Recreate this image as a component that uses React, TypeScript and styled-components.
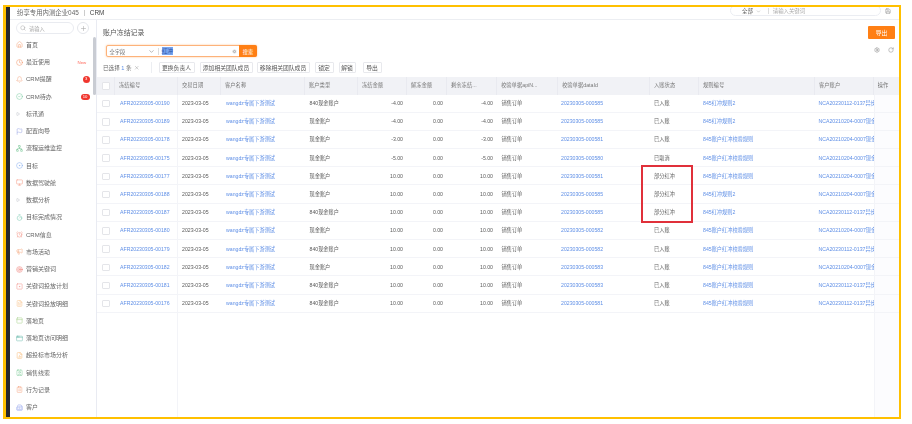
import React from "react";
import styled, { createGlobalStyle } from "styled-components";
import {
  House, Clock, Bell, CircleCheck, Flag, Network, CircleDot, Monitor, Timer, AlarmClock, Megaphone, Target,
  SquareDot, FileText, PanelTop, AppWindow, FileChartColumn, Contact, ClipboardList, Building2,
  Search, Plus, ChevronDown, X, CircleX, Settings, RotateCw, Save, Play,
} from "lucide-react";

const Global = createGlobalStyle`
  html, body { margin: 0; padding: 0; background: #fff; }
  * { box-sizing: border-box; }
  body { font-family: "Liberation Sans", "Noto Sans CJK SC", sans-serif; color: #555; }
`;

const COLS = "18px 63px 43px 84px 53px 49px 40px 50px 61px 92px 49px 116px 58.7px 25.3px";

const Frame = styled.div`
  width: 898px; height: 414px; margin: 5px 0 0 3px;
  border: 2px solid #ffc000; border-left-width: 3px;
  display: flex; overflow: hidden; background: #fff;
`;
const Strip = styled.div`width: 4px; background: #26282e; flex: none;`;
const Main = styled.div`flex: 1; min-width: 0; display: flex; flex-direction: column; filter: blur(0.3px);`;
const Header = styled.header`
  height: 12.5px; flex: none; display: flex; align-items: center; justify-content: space-between;
  padding: 0 8px 0 7px; border-bottom: 1px solid #eceef2; overflow: hidden;
`;
const Brand = styled.div`display: flex; align-items: center; font-size: 6.4px; line-height: 8px; color: #666;`;
const BrandSep = styled.span`width: 1px; height: 6px; background: #ccc; margin: 0 5px;`;
const BrandApp = styled.b`font-weight: 400; color: #444;`;
const HeaderRight = styled.div`display: flex; align-items: flex-start; gap: 4px; align-self: flex-start;`;
const Pill = styled.div`
  width: 151px; height: 11px; margin-top: -2px; border: 1px solid #ebedf2; border-radius: 6px;
  display: flex; align-items: center; padding: 1px 0 0 11px; font-size: 5.4px; line-height: 7px; color: #555;
`;
const PillDivider = styled.span`width: 1px; height: 6px; background: #ddd; margin: 0 4px 0 7px;`;
const PillHint = styled.span`color: #aaa;`;
const PillChevron = styled.span`display: flex; margin-left: 3px; color: #999;`;
const HeaderIcon = styled.span`display: flex; color: #888; margin-top: 1px;`;

const Body = styled.div`flex: 1; min-height: 0; display: flex;`;
const Side = styled.aside`
  width: 87px; flex: none; position: relative; border-right: 1px solid #e9ebf2; padding-top: 2.5px; overflow: hidden;
`;
const SideSearch = styled.div`display: flex; align-items: center; padding-left: 6px; gap: 3px; height: 12px; margin-bottom: 2.3px;`;
const SearchBox = styled.div`
  width: 58px; height: 12px; border: 1px solid #e9ebf0; border-radius: 6px; display: flex; align-items: center;
  gap: 3px; padding-left: 3px; color: #aaa; font-size: 5.2px;
`;
const AddCircle = styled.div`
  width: 12px; height: 12px; border: 1px solid #e4e6eb; border-radius: 50%; display: flex; align-items: center;
  justify-content: center; color: #aaa;
`;
const NavItem = styled.div`
  height: 17.25px; display: flex; align-items: center; padding-left: 6px; font-size: 6px; line-height: 8px; color: #666; position: relative;
`;
const NavIcon = styled.span<{ $c: string }>`width: 10px; display: flex; align-items: center; color: ${p => p.$c}; flex: none;`;
const NavLabel = styled.span`white-space: nowrap;`;
const NewTag = styled.span`position: absolute; left: 67.5px; top: 6px; color: #ff6b5e; font-size: 4.4px; line-height: 5px;`;
const Badge = styled.span<{ $l: number; $w: number }>`
  position: absolute; left: ${p => p.$l}px; top: 5.5px; width: ${p => p.$w}px; height: 6.5px; border-radius: 4px;
  background: #f0362e; color: #fff; font-size: 4.2px; line-height: 6.5px; text-align: center;
`;
const Thumb = styled.div`position: absolute; left: 83px; top: 17.5px; width: 3px; height: 58px; background: #c9ccd3; border-radius: 2px;`;

const Content = styled.main`flex: 1; min-width: 0; display: flex; flex-direction: column;`;
const Head = styled.div`
  height: 25.5px; flex: none; display: flex; justify-content: space-between; align-items: flex-start;
  padding: 6.5px 4px 0 6px;
`;
const Title = styled.h1`margin: 0; font-weight: 400; font-size: 6.9px; line-height: 13px; color: #555;`;
const ExportBtn = styled.button`
  width: 27px; height: 13px; padding: 0; border: 0; border-radius: 1px; background: #ff7f14; color: #fff;
  font: inherit; font-size: 5.8px;
`;
const SearchRow = styled.div`height: 12px; flex: none; display: flex; justify-content: space-between; padding: 0 5px 0 9px;`;
const Finder = styled.div`
  width: 151px; height: 12px; display: flex; align-items: center; border: 1px solid #fdb27a; border-radius: 2px;
  box-shadow: 0 0 2px rgba(255,140,40,.55); font-size: 5.2px; color: #666; background: #fff;
`;
const FieldSelect = styled.div`width: 51px; display: flex; align-items: center; justify-content: space-between; padding: 0 3px 0 2.5px;`;
const FieldDivider = styled.span`width: 1px; height: 7px; background: #ddd; margin-right: 3px;`;
const Selected = styled.span`
  background: #79a4ee; color: #2c55a8; width: 11px; height: 8px; line-height: 8px; font-size: 5.4px; flex: none;
`;
const ClearIcon = styled.span`margin-left: auto; margin-right: 2.5px; display: flex; color: #bbb;`;
const FindBtn = styled.button`
  width: 18px; height: 12px; margin-right: -1px; padding: 0; border: 0; background: #ff7f14; color: #fff;
  font: inherit; font-size: 5.2px; border-radius: 0 2px 2px 0;
`;
const Tools = styled.div`display: flex; gap: 8px; height: 10px; align-items: center; color: #888;`;
const Toolbar = styled.div`
  height: 11px; margin-top: 5px; flex: none; display: flex; align-items: center; padding-left: 6px; font-size: 5.6px; color: #666;
`;
const SelCount = styled.span`white-space: nowrap; width: 31px;`;
const SelNum = styled.span`color: #5a8ee8;`;
const SelClose = styled.span`display: flex; width: 6px; color: #999;`;
const ToolDivider = styled.span`width: 1px; height: 11px; background: #eceef2; margin: 0 6.5px 0 11px;`;
const ToolBtn = styled.button<{ $w: number; $ml?: number }>`
  width: ${p => p.$w}px; height: 11px; padding: 0; margin-left: ${p => p.$ml ?? 0}px; flex: none;
  background: #fff; border: 1px solid #e8e9ed; border-radius: 1px; font: inherit; font-size: 5.8px; color: #555; white-space: nowrap;
`;

const Table = styled.div`margin-top: 4px; flex: 1; min-height: 0; display: flex; flex-direction: column;`;
const HeadRow = styled.div`
  height: 17.5px; flex: none; display: grid; grid-template-columns: ${COLS}; background: #f1f2f6;
`;
const HeadCell = styled.div`
  display: flex; align-items: center; padding-left: 4px; font-size: 5.3px; line-height: 7px; color: #777; white-space: nowrap; overflow: hidden;
  border-right: 1px solid #e9eaf0;
  &:first-child { padding-left: 0; }
  &:last-child { border-right: 0; }
`;
const Row = styled.div`
  height: 18.2px; flex: none; display: grid; grid-template-columns: ${COLS}; border-bottom: 1px solid #f3f4f8;
`;
const Filler = styled.div`flex: 1; display: grid; grid-template-columns: ${COLS};`;
const Cell = styled.div<{ $link?: boolean; $right?: boolean; $line?: boolean; $fixed?: boolean; $pad?: number }>`
  display: flex; align-items: center; justify-content: ${p => (p.$right ? "flex-end" : "flex-start")};
  padding: ${p => (p.$right ? "1px 4px 0 0" : `1px 0 0 ${p.$pad ?? 4}px`)};
  font-size: 5.2px; line-height: 7px; white-space: nowrap; overflow: hidden;
  color: ${p => (p.$link ? "#5f8fe6" : "#5a5a5a")};
  ${p => (p.$line ? "border-right: 1px solid #f3f4f8;" : "")}
  ${p => (p.$fixed ? "border-left: 1px solid #f3f4f8; background: #fcfcfe;" : "")}
`;
const Check = styled.span`
  width: 7.5px; height: 7.5px; margin-left: 5px; border: 1px solid #e4e5e9; border-radius: 1px; background: #fff; flex: none;
`;
const HighlightBox = styled.div`
  position: absolute; left: 641px; top: 165px; width: 52px; height: 58px; border: 2px solid #e0303a; pointer-events: none;
`;
const Stage = styled.div`position: relative; width: 912px; height: 424px; overflow: hidden;`;

type RowData = [string, string, string, string, string, string, string, string];
const A = "NCA20230112-0137异步现金账户";
const B = "NCA20210204-0007现金账户";
const R1 = "845红冲规则2";
const R2 = "845账户红冲校验规则";
const rows: RowData[] = [
  ["190", "840现金账户", "-4.00", "-4.00", "000585", "已入账", R1, A],
  ["189", "现金账户", "-4.00", "-4.00", "000585", "已入账", R1, B],
  ["178", "现金账户", "-3.00", "-3.00", "000581", "已入账", R2, B],
  ["175", "现金账户", "-5.00", "-5.00", "000580", "已取消", R2, B],
  ["177", "现金账户", "10.00", "10.00", "000581", "部分红冲", R2, B],
  ["188", "现金账户", "10.00", "10.00", "000585", "部分红冲", R1, B],
  ["187", "840现金账户", "10.00", "10.00", "000585", "部分红冲", R1, A],
  ["180", "现金账户", "10.00", "10.00", "000582", "已入账", R2, B],
  ["179", "840现金账户", "10.00", "10.00", "000582", "已入账", R2, A],
  ["182", "现金账户", "10.00", "10.00", "000583", "已入账", R2, B],
  ["181", "840现金账户", "10.00", "10.00", "000583", "已入账", R2, A],
  ["176", "840现金账户", "10.00", "10.00", "000581", "已入账", R2, A],
];

const heads = ["", "冻结编号", "交易日期", "客户名称", "账户类型", "冻结金额", "解冻金额", "剩余冻结...", "校验单据apiN...", "校验单据dataId", "入账状态", "规则编号", "客户账户", "操作"];

const nav: { label: string; Icon: React.ElementType; c: string; extra?: React.ReactNode }[] = [
  { label: "首页", Icon: House, c: "#f39a6b" },
  { label: "最近使用", Icon: Clock, c: "#f08a5a", extra: <NewTag>New</NewTag> },
  { label: "CRM提醒", Icon: Bell, c: "#f3a17c", extra: <Badge $l={73} $w={6.5}>3</Badge> },
  { label: "CRM待办", Icon: CircleCheck, c: "#71c79a", extra: <Badge $l={70.5} $w={9}>10</Badge> },
  { label: "标讯通", Icon: Play, c: "#8a8f9c" },
  { label: "配置向导", Icon: Flag, c: "#8f9be0" },
  { label: "流程运维监控", Icon: Network, c: "#6cc08c" },
  { label: "目标", Icon: CircleDot, c: "#7ba7ee" },
  { label: "数据驾驶舱", Icon: Monitor, c: "#f2917a" },
  { label: "数据分析", Icon: Play, c: "#8a8f9c" },
  { label: "目标完成情况", Icon: Timer, c: "#6fc4ab" },
  { label: "CRM信息", Icon: AlarmClock, c: "#f28a7c" },
  { label: "市场活动", Icon: Megaphone, c: "#f5a579" },
  { label: "营销关键词", Icon: Target, c: "#ee7b74" },
  { label: "关键词投放计划", Icon: SquareDot, c: "#f0897f" },
  { label: "关键词投放明细", Icon: FileText, c: "#f7bc80" },
  { label: "落地页", Icon: PanelTop, c: "#9ccb7e" },
  { label: "落地页访问明细", Icon: AppWindow, c: "#63b8a8" },
  { label: "超投标市场分析", Icon: FileChartColumn, c: "#f7b56f" },
  { label: "销售线索", Icon: Contact, c: "#7fcb9a" },
  { label: "行为记录", Icon: ClipboardList, c: "#f5a07c" },
  { label: "客户", Icon: Building2, c: "#8f9fec" },
];

export default function App() {
  return (
    <Stage>
      <Global />
      <Frame>
        <Strip />
        <Main>
          <Header>
            <Brand>纷享专用内测企业045<BrandSep /><BrandApp>CRM</BrandApp></Brand>
            <HeaderRight>
              <Pill>全部<PillChevron><ChevronDown size={5} /></PillChevron><PillDivider /><PillHint>请输入关键词</PillHint></Pill>
              <HeaderIcon><Save size={6} /></HeaderIcon>
            </HeaderRight>
          </Header>
          <Body>
            <Side>
              <SideSearch>
                <SearchBox><Search size={6} />请输入</SearchBox>
                <AddCircle><Plus size={7} /></AddCircle>
              </SideSearch>
              {nav.map(({ label, Icon, c, extra }) => (
                <NavItem key={label}>
                  <NavIcon $c={c}><Icon size={label === "标讯通" || label === "数据分析" ? 4 : 7} strokeWidth={1.6} /></NavIcon>
                  <NavLabel>{label}</NavLabel>
                  {extra}
                </NavItem>
              ))}
              <Thumb />
            </Side>
            <Content>
              <Head>
                <Title>账户冻结记录</Title>
                <ExportBtn>导出</ExportBtn>
              </Head>
              <SearchRow>
                <Finder>
                  <FieldSelect>全字段<ChevronDown size={7} color="#888" /></FieldSelect>
                  <FieldDivider />
                  <Selected>红冲</Selected>
                  <ClearIcon><CircleX size={5} fill="#bbb" color="#fff" /></ClearIcon>
                  <FindBtn>搜索</FindBtn>
                </Finder>
                <Tools><Settings size={6} /><RotateCw size={6} /></Tools>
              </SearchRow>
              <Toolbar>
                <SelCount>已选择 <SelNum>1</SelNum> 条</SelCount>
                <SelClose><X size={5.5} /></SelClose>
                <ToolDivider />
                <ToolBtn $w={36}>更换负责人</ToolBtn>
                <ToolBtn $w={53} $ml={5}>添加相关团队成员</ToolBtn>
                <ToolBtn $w={53} $ml={4}>移除相关团队成员</ToolBtn>
                <ToolBtn $w={19} $ml={5}>锁定</ToolBtn>
                <ToolBtn $w={17} $ml={5}>解锁</ToolBtn>
                <ToolBtn $w={19} $ml={7}>导出</ToolBtn>
              </Toolbar>
              <Table>
                <HeadRow>
                  {heads.map((h, i) => (
                    <HeadCell key={i}>{i === 0 ? <Check /> : h}</HeadCell>
                  ))}
                </HeadRow>
                {rows.map(r => (
                  <Row key={r[0]}>
                    <Cell $pad={0}><Check /></Cell>
                    <Cell $link $pad={5} $line>AFR20230305-00{r[0]}</Cell>
                    <Cell $pad={4}>2023-03-05</Cell>
                    <Cell $link $pad={5}>wangdz专属下游测试</Cell>
                    <Cell $pad={4.5}>{r[1]}</Cell>
                    <Cell $right>{r[2]}</Cell>
                    <Cell $right>0.00</Cell>
                    <Cell $right>{r[3]}</Cell>
                    <Cell $pad={4.5}>销售订单</Cell>
                    <Cell $link $pad={3}>20230305-{r[4]}</Cell>
                    <Cell>{r[5]}</Cell>
                    <Cell $link>{r[6]}</Cell>
                    <Cell $link $pad={3.5}>{r[7]}</Cell>
                    <Cell $fixed />
                  </Row>
                ))}
                <Filler>
                  {heads.map((_, i) => (
                    <Cell key={i} $line={i === 1} $fixed={i === 13} />
                  ))}
                </Filler>
              </Table>
            </Content>
          </Body>
        </Main>
      </Frame>
      <HighlightBox />
    </Stage>
  );
}
